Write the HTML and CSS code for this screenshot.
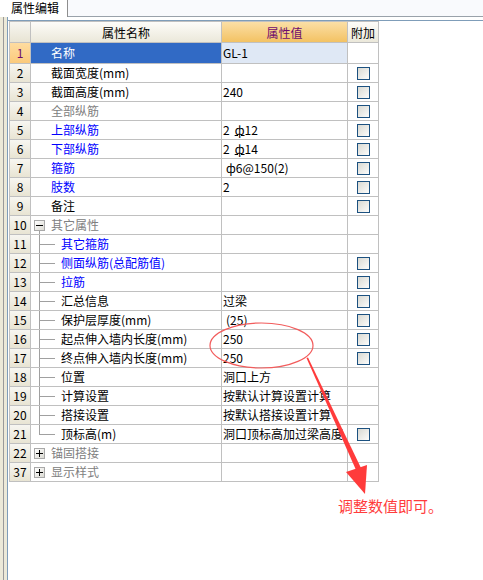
FILE: index.html
```html
<!DOCTYPE html>
<html lang="zh">
<head>
<meta charset="utf-8">
<title>属性编辑</title>
<link rel="stylesheet" href="styles.css">
</head>
<body>
<div class="app">
  <div class="tabbar"><div class="tab">属性编辑</div></div>
  <div class="main">
    <div class="strip"></div>
    <div class="panel">
      <div class="frame">
        <div class="grid">
          <div class="c h num"></div>
          <div class="c h name-h">属性名称</div>
          <div class="c h val-h">属性值</div>
          <div class="c h add-h">附加</div>

          <div class="c num sel-num">1</div>
          <div class="c name sel-name">名称</div>
          <div class="c val sel-val">GL-1</div>
          <div class="c add"></div>

          <div class="c num">2</div>
          <div class="c name">截面宽度(mm)</div>
          <div class="c val"></div>
          <div class="c add"><span class="cb"></span></div>

          <div class="c num">3</div>
          <div class="c name">截面高度(mm)</div>
          <div class="c val">240</div>
          <div class="c add"><span class="cb"></span></div>

          <div class="c num">4</div>
          <div class="c name gray">全部纵筋</div>
          <div class="c val"></div>
          <div class="c add"><span class="cb"></span></div>

          <div class="c num">5</div>
          <div class="c name blue">上部纵筋</div>
          <div class="c val">2<span class="g3">ф</span>12</div>
          <div class="c add"><span class="cb"></span></div>

          <div class="c num">6</div>
          <div class="c name blue">下部纵筋</div>
          <div class="c val">2<span class="g3">ф</span>14</div>
          <div class="c add"><span class="cb"></span></div>

          <div class="c num">7</div>
          <div class="c name blue">箍筋</div>
          <div class="c val val-ind">ф6@150(2)</div>
          <div class="c add"><span class="cb"></span></div>

          <div class="c num">8</div>
          <div class="c name blue">肢数</div>
          <div class="c val">2</div>
          <div class="c add"><span class="cb"></span></div>

          <div class="c num">9</div>
          <div class="c name">备注</div>
          <div class="c val"></div>
          <div class="c add"><span class="cb"></span></div>

          <div class="c num">10</div>
          <div class="c name group open gray"><span class="exp"><svg width="9" height="9" viewBox="0 0 9 9"><path d="M1 4.5h7" stroke="#000" stroke-width="1"/></svg></span>其它属性</div>
          <div class="c val"></div>
          <div class="c add"></div>

          <div class="c num">11</div>
          <div class="c name tree blue"><span class="guide"></span>其它箍筋</div>
          <div class="c val"></div>
          <div class="c add"></div>

          <div class="c num">12</div>
          <div class="c name tree blue"><span class="guide"></span>侧面纵筋(总配筋值)</div>
          <div class="c val"></div>
          <div class="c add"><span class="cb"></span></div>

          <div class="c num">13</div>
          <div class="c name tree blue"><span class="guide"></span>拉筋</div>
          <div class="c val"></div>
          <div class="c add"><span class="cb"></span></div>

          <div class="c num">14</div>
          <div class="c name tree"><span class="guide"></span>汇总信息</div>
          <div class="c val">过梁</div>
          <div class="c add"><span class="cb"></span></div>

          <div class="c num">15</div>
          <div class="c name tree"><span class="guide"></span>保护层厚度(mm)</div>
          <div class="c val val-ind">(25)</div>
          <div class="c add"><span class="cb"></span></div>

          <div class="c num">16</div>
          <div class="c name tree"><span class="guide"></span>起点伸入墙内长度(mm)</div>
          <div class="c val">250</div>
          <div class="c add"><span class="cb"></span></div>

          <div class="c num">17</div>
          <div class="c name tree"><span class="guide"></span>终点伸入墙内长度(mm)</div>
          <div class="c val">250</div>
          <div class="c add"><span class="cb"></span></div>

          <div class="c num">18</div>
          <div class="c name tree"><span class="guide"></span>位置</div>
          <div class="c val">洞口上方</div>
          <div class="c add"></div>

          <div class="c num">19</div>
          <div class="c name tree"><span class="guide"></span>计算设置</div>
          <div class="c val">按默认计算设置计算</div>
          <div class="c add"></div>

          <div class="c num">20</div>
          <div class="c name tree"><span class="guide"></span>搭接设置</div>
          <div class="c val">按默认搭接设置计算</div>
          <div class="c add"></div>

          <div class="c num">21</div>
          <div class="c name tree"><span class="guide last"></span>顶标高(m)</div>
          <div class="c val">洞口顶标高加过梁高度</div>
          <div class="c add"><span class="cb"></span></div>

          <div class="c num">22</div>
          <div class="c name group gray"><span class="exp"><svg width="9" height="9" viewBox="0 0 9 9"><path d="M1 4.5h7M4.5 1v7" stroke="#000" stroke-width="1"/></svg></span>锚固搭接</div>
          <div class="c val"></div>
          <div class="c add"></div>

          <div class="c num">37</div>
          <div class="c name group gray"><span class="exp"><svg width="9" height="9" viewBox="0 0 9 9"><path d="M1 4.5h7M4.5 1v7" stroke="#000" stroke-width="1"/></svg></span>显示样式</div>
          <div class="c val"></div>
          <div class="c add"></div>
        </div>
      </div>
    </div>
  </div>

  <svg class="annot" width="483" height="580" viewBox="0 0 483 580">
    <ellipse cx="261.5" cy="345.5" rx="51.5" ry="22.5" fill="none" stroke="#f25c5c" stroke-width="1.2"/>
    <polygon points="306.5,358 308,357.5 361,468 356,470" fill="#ff3b3b"/>
    <polygon points="346,472 367,465 365,494" fill="#ff3b3b"/>
  </svg>
  <div class="note">调整数值即可。</div>
</div>
</body>
</html>
```

FILE: styles.css
```css
* { box-sizing: border-box; }

html, body {
  margin: 0;
  padding: 0;
  background: #ffffff;
}

body {
  font-family: "Noto Sans CJK SC", "Noto Sans", sans-serif;
  font-size: 12px;
  color: #000;
}

.app {
  position: relative;
  width: 483px;
  height: 580px;
  overflow: hidden;
  background: #fff;
}

.tabbar {
  height: 17px;
  background: #f9fafd;
  border-bottom: 1px solid #9aa2aa;
  display: flex;
  align-items: flex-start;
}

.tab {
  width: 68px;
  height: 17px;
  background: #fff;
  border-right: 1px solid #8e8e8e;
  padding-left: 11px;
  line-height: 15px;
  font-size: 12px;
}

.main {
  display: flex;
  height: 563px;
}

.strip {
  width: 7px;
  background: linear-gradient(to right, #ece9d8 0 3px, #9a9a9a 3px 4px, #ece9d8 4px 7px);
}

.panel {
  flex: 1;
  background: #fff;
  border-left: 1px solid #7f9db9;
  padding-top: 3px;
}

.frame {
  border-top: 1px solid #7f9db9;
  padding-left: 1px;
}

.grid {
  display: grid;
  grid-template-columns: 21px 191px 126px 31px;
  grid-template-rows: 21px 21px;
  grid-auto-rows: 19px;
  width: max-content;
  border-left: 1px solid #c0c0c0;
  border-top: 1px solid #c0c0c0;
}

.c {
  display: flex;
  align-items: center;
  overflow: hidden;
  white-space: nowrap;
  border-right: 1px solid #c0c0c0;
  border-bottom: 1px solid #c0c0c0;
  line-height: 16px;
}

.h {
  justify-content: center;
  padding-top: 2px;
  background: linear-gradient(#fdfcf9, #ebe8da);
}

.val-h {
  background: linear-gradient(#fbdfa6, #f3c263);
  color: #6e0b6e;
}

.add-h {
  background: linear-gradient(#fdfcf9, #ebe8da);
}

.num {
  justify-content: center;
  background: linear-gradient(#f7f6f1, #e8e4d3);
}

.sel-num {
  background: linear-gradient(#fedca0, #fbca7c);
  color: #6e0b6e;
}

.name {
  padding-left: 20px;
}

.sel-name {
  background: #316ac5;
  color: #fff;
}

.val {
  padding-left: 1px;
}

.val-ind {
  padding-left: 4px;
}

.sel-val {
  background: #dfe8f5;
}

.add {
  padding-left: 9px;
}

.cb {
  display: block;
  width: 13px;
  height: 13px;
  margin-top: 1px;
  border: 1px solid #1c5180;
  background: linear-gradient(135deg, #d9d9d2, #fcfcfb);
}

.gray { color: #808080; }
.blue { color: #0000ff; }

.g3 {
  margin-left: 5px;
  text-decoration: underline;
  text-underline-offset: 0px;
}

.group {
  padding-left: 3px;
}

.group.open {
  background: linear-gradient(#a0a0a0, #a0a0a0) 8px 100% / 1px 4px no-repeat;
}

.exp {
  display: flex;
  width: 11px;
  height: 11px;
  margin-right: 6px;
  border: 1px solid #a9a9a9;
  background: linear-gradient(135deg, #ffffff, #dcdbd4);
}

.tree {
  padding-left: 8px;
}

.guide {
  align-self: stretch;
  width: 22px;
  flex: none;
  background:
    linear-gradient(#a0a0a0, #a0a0a0) 0 0 / 1px 100% no-repeat,
    linear-gradient(#a0a0a0, #a0a0a0) 1px 9px / 15px 1px no-repeat;
}

.guide.last {
  background:
    linear-gradient(#a0a0a0, #a0a0a0) 0 0 / 1px 10px no-repeat,
    linear-gradient(#a0a0a0, #a0a0a0) 1px 9px / 15px 1px no-repeat;
}

.annot {
  position: absolute;
  left: 0;
  top: 0;
  pointer-events: none;
}

.note {
  position: absolute;
  left: 338px;
  top: 496px;
  font-size: 15px;
  line-height: 20px;
  color: #ff3c3c;
}
```
